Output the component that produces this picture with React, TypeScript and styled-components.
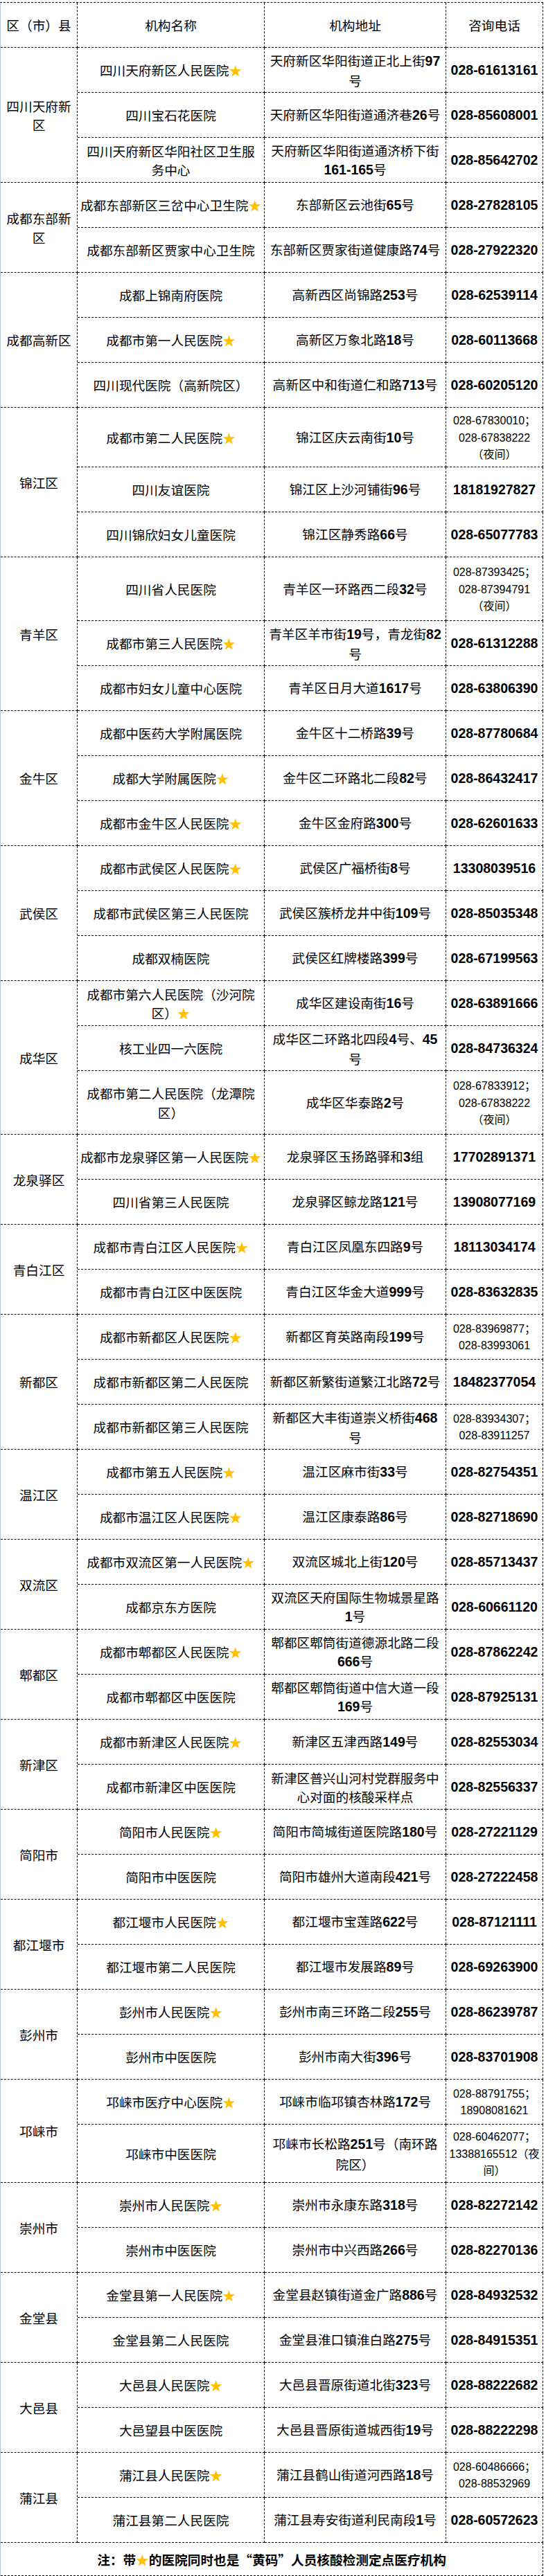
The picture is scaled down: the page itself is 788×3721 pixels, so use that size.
import React from "react";
import styled, { createGlobalStyle } from "styled-components";

interface IRow {
  n: string;
  a: string;
  p: string;
  star?: boolean;
  small?: boolean;
  h?: number;
}

interface IGroup {
  d: string;
  rows: IRow[];
}

const groups: IGroup[] = [
  {
    d: "四川天府新\n区",
    rows: [
      { n: "四川天府新区人民医院", star: true, a: "天府新区华阳街道正北上街97\n号", p: "028-61613161" },
      { n: "四川宝石花医院", a: "天府新区华阳街道通济巷26号", p: "028-85608001" },
      { n: "四川天府新区华阳社区卫生服\n务中心", a: "天府新区华阳街道通济桥下街\n161-165号", p: "028-85642702" },
    ],
  },
  {
    d: "成都东部新\n区",
    rows: [
      { n: "成都东部新区三岔中心卫生院", star: true, a: "东部新区云池街65号", p: "028-27828105" },
      { n: "成都东部新区贾家中心卫生院", a: "东部新区贾家街道健康路74号", p: "028-27922320" },
    ],
  },
  {
    d: "成都高新区",
    rows: [
      { n: "成都上锦南府医院", a: "高新西区尚锦路253号", p: "028-62539114" },
      { n: "成都市第一人民医院", star: true, a: "高新区万象北路18号", p: "028-60113668" },
      { n: "四川现代医院（高新院区）", a: "高新区中和街道仁和路713号", p: "028-60205120" },
    ],
  },
  {
    d: "锦江区",
    rows: [
      { n: "成都市第二人民医院", star: true, a: "锦江区庆云南街10号", p: "028-67830010；\n028-67838222\n（夜间）", small: true, h: 86 },
      { n: "四川友谊医院", a: "锦江区上沙河铺街96号", p: "18181927827" },
      { n: "四川锦欣妇女儿童医院", a: "锦江区静秀路66号", p: "028-65077783" },
    ],
  },
  {
    d: "青羊区",
    rows: [
      { n: "四川省人民医院", a: "青羊区一环路西二段32号", p: "028-87393425；\n028-87394791\n（夜间）", small: true, h: 92 },
      { n: "成都市第三人民医院", star: true, a: "青羊区羊市街19号，青龙街82\n号", p: "028-61312288" },
      { n: "成都市妇女儿童中心医院", a: "青羊区日月大道1617号", p: "028-63806390" },
    ],
  },
  {
    d: "金牛区",
    rows: [
      { n: "成都中医药大学附属医院", a: "金牛区十二桥路39号", p: "028-87780684" },
      { n: "成都大学附属医院", star: true, a: "金牛区二环路北二段82号", p: "028-86432417" },
      { n: "成都市金牛区人民医院", star: true, a: "金牛区金府路300号", p: "028-62601633" },
    ],
  },
  {
    d: "武侯区",
    rows: [
      { n: "成都市武侯区人民医院", star: true, a: "武侯区广福桥街8号", p: "13308039516" },
      { n: "成都市武侯区第三人民医院", a: "武侯区簇桥龙井中街109号", p: "028-85035348" },
      { n: "成都双楠医院", a: "武侯区红牌楼路399号", p: "028-67199563" },
    ],
  },
  {
    d: "成华区",
    rows: [
      { n: "成都市第六人民医院（沙河院\n区）", star: true, a: "成华区建设南街16号", p: "028-63891666" },
      { n: "核工业四一六医院", a: "成华区二环路北四段4号、45\n号", p: "028-84736324" },
      { n: "成都市第二人民医院（龙潭院\n区）", a: "成华区华泰路2号", p: "028-67833912；\n028-67838222\n（夜间）", small: true, h: 92 },
    ],
  },
  {
    d: "龙泉驿区",
    rows: [
      { n: "成都市龙泉驿区第一人民医院", star: true, a: "龙泉驿区玉扬路驿和3组", p: "17702891371" },
      { n: "四川省第三人民医院", a: "龙泉驿区鲸龙路121号", p: "13908077169" },
    ],
  },
  {
    d: "青白江区",
    rows: [
      { n: "成都市青白江区人民医院", star: true, a: "青白江区凤凰东四路9号", p: "18113034174" },
      { n: "成都市青白江区中医医院", a: "青白江区华金大道999号", p: "028-83632835" },
    ],
  },
  {
    d: "新都区",
    rows: [
      { n: "成都市新都区人民医院", star: true, a: "新都区育英路南段199号", p: "028-83969877；\n028-83993061", small: true },
      { n: "成都市新都区第二人民医院", a: "新都区新繁街道繁江北路72号", p: "18482377054" },
      { n: "成都市新都区第三人民医院", a: "新都区大丰街道崇义桥街468\n号", p: "028-83934307；\n028-83911257", small: true },
    ],
  },
  {
    d: "温江区",
    rows: [
      { n: "成都市第五人民医院", star: true, a: "温江区麻市街33号", p: "028-82754351" },
      { n: "成都市温江区人民医院", star: true, a: "温江区康泰路86号", p: "028-82718690" },
    ],
  },
  {
    d: "双流区",
    rows: [
      { n: "成都市双流区第一人民医院", star: true, a: "双流区城北上街120号", p: "028-85713437" },
      { n: "成都京东方医院", a: "双流区天府国际生物城景星路\n1号", p: "028-60661120" },
    ],
  },
  {
    d: "郫都区",
    rows: [
      { n: "成都市郫都区人民医院", star: true, a: "郫都区郫筒街道德源北路二段\n666号", p: "028-87862242" },
      { n: "成都市郫都区中医医院", a: "郫都区郫筒街道中信大道一段\n169号", p: "028-87925131" },
    ],
  },
  {
    d: "新津区",
    rows: [
      { n: "成都市新津区人民医院", star: true, a: "新津区五津西路149号", p: "028-82553034" },
      { n: "成都市新津区中医医院", a: "新津区普兴山河村党群服务中\n心对面的核酸采样点", p: "028-82556337" },
    ],
  },
  {
    d: "简阳市",
    rows: [
      { n: "简阳市人民医院", star: true, a: "简阳市简城街道医院路180号", p: "028-27221129" },
      { n: "简阳市中医医院", a: "简阳市雄州大道南段421号", p: "028-27222458" },
    ],
  },
  {
    d: "都江堰市",
    rows: [
      { n: "都江堰市人民医院", star: true, a: "都江堰市宝莲路622号", p: "028-87121111" },
      { n: "都江堰市第二人民医院", a: "都江堰市发展路89号", p: "028-69263900" },
    ],
  },
  {
    d: "彭州市",
    rows: [
      { n: "彭州市人民医院", star: true, a: "彭州市南三环路二段255号", p: "028-86239787" },
      { n: "彭州市中医医院", a: "彭州市南大街396号", p: "028-83701908" },
    ],
  },
  {
    d: "邛崃市",
    rows: [
      { n: "邛崃市医疗中心医院", star: true, a: "邛崃市临邛镇杏林路172号", p: "028-88791755；\n18908081621", small: true },
      { n: "邛崃市中医医院", a: "邛崃市长松路251号（南环路\n院区）", p: "028-60462077；\n13388165512（夜\n间）", small: true, h: 84 },
    ],
  },
  {
    d: "崇州市",
    rows: [
      { n: "崇州市人民医院", star: true, a: "崇州市永康东路318号", p: "028-82272142" },
      { n: "崇州市中医医院", a: "崇州市中兴西路266号", p: "028-82270136" },
    ],
  },
  {
    d: "金堂县",
    rows: [
      { n: "金堂县第一人民医院", star: true, a: "金堂县赵镇街道金广路886号", p: "028-84932532" },
      { n: "金堂县第二人民医院", a: "金堂县淮口镇淮白路275号", p: "028-84915351" },
    ],
  },
  {
    d: "大邑县",
    rows: [
      { n: "大邑县人民医院", star: true, a: "大邑县晋原街道北街323号", p: "028-88222682" },
      { n: "大邑望县中医医院", a: "大邑县晋原街道城西街19号", p: "028-88222298" },
    ],
  },
  {
    d: "蒲江县",
    rows: [
      { n: "蒲江县人民医院", star: true, a: "蒲江县鹤山街道河西路18号", p: "028-60486666；\n028-88532969", small: true },
      { n: "蒲江县第二人民医院", a: "蒲江县寿安街道利民南段1号", p: "028-60572623" },
    ],
  },
];

const GlobalStyle = createGlobalStyle`
  html, body {
    margin: 0;
    padding: 0;
    background: #fff;
  }
  body {
    font-family: "Noto Sans CJK SC", "Noto Sans", sans-serif;
    color: #000;
  }
`;

const Page = styled.div`
  width: 788px;
  padding-top: 3px;
`;

const Grid = styled.div`
  display: grid;
  grid-template-columns: 111px 270px 262px 140px;
  width: fit-content;
  border-top: 1px dashed #000;
  border-left: 1px solid #b7c5dc;
`;

const Cell = styled.div<{ $h?: number }>`
  box-sizing: border-box;
  min-height: ${(p) => p.$h || 65}px;
  border-right: 1px dashed #000;
  border-bottom: 1px dashed #000;
  display: flex;
  align-items: center;
  justify-content: center;
  font-size: 18.67px;
`;

const DistrictCell = styled(Cell)<{ $span: number }>`
  grid-row: span ${(p) => p.$span};
  min-height: 0;
`;

const NoteCell = styled(Cell)`
  grid-column: 1 / -1;
  min-height: 48px;
  font-weight: 700;
`;

const Latin = styled.span`
  font-family: "Liberation Sans", Arial, sans-serif;
  font-weight: 700;
  font-size: 19.5px;
`;

const Text = styled.div`
  white-space: pre;
  line-height: 27.5px;
  text-align: center;
`;

const SmallText = styled(Text)`
  font-size: 16px;
  line-height: 23.5px;

  ${Latin} {
    font-weight: 400;
    font-size: 16px;
  }
`;

const Star = styled.span`
  color: #ffc000;
`;

function withLatin(str: string) {
  return str.split(/([0-9][0-9-]*)/).map((part, i) =>
    /^[0-9]/.test(part) ? <Latin key={i}>{part}</Latin> : part
  );
}

export default function App() {
  return (
    <>
      <GlobalStyle />
      <Page>
        <Grid>
          <Cell>
            <Text>区（市）县</Text>
          </Cell>
          <Cell>
            <Text>机构名称</Text>
          </Cell>
          <Cell>
            <Text>机构地址</Text>
          </Cell>
          <Cell>
            <Text>咨询电话</Text>
          </Cell>

          {groups.map((g) => (
            <React.Fragment key={g.d}>
              <DistrictCell $span={g.rows.length}>
                <Text>{g.d}</Text>
              </DistrictCell>
              {g.rows.map((r) => (
                <React.Fragment key={r.n}>
                  <Cell $h={r.h}>
                    <Text>
                      {r.n}
                      {r.star ? <Star>★</Star> : null}
                    </Text>
                  </Cell>
                  <Cell $h={r.h}>
                    <Text>{withLatin(r.a)}</Text>
                  </Cell>
                  <Cell $h={r.h}>
                    {r.small ? (
                      <SmallText>{withLatin(r.p)}</SmallText>
                    ) : (
                      <Text>{withLatin(r.p)}</Text>
                    )}
                  </Cell>
                </React.Fragment>
              ))}
            </React.Fragment>
          ))}

          <NoteCell>
            <Text>
              注：带<Star>★</Star>的医院同时也是“黄码”人员核酸检测定点医疗机构
            </Text>
          </NoteCell>
        </Grid>
      </Page>
    </>
  );
}
